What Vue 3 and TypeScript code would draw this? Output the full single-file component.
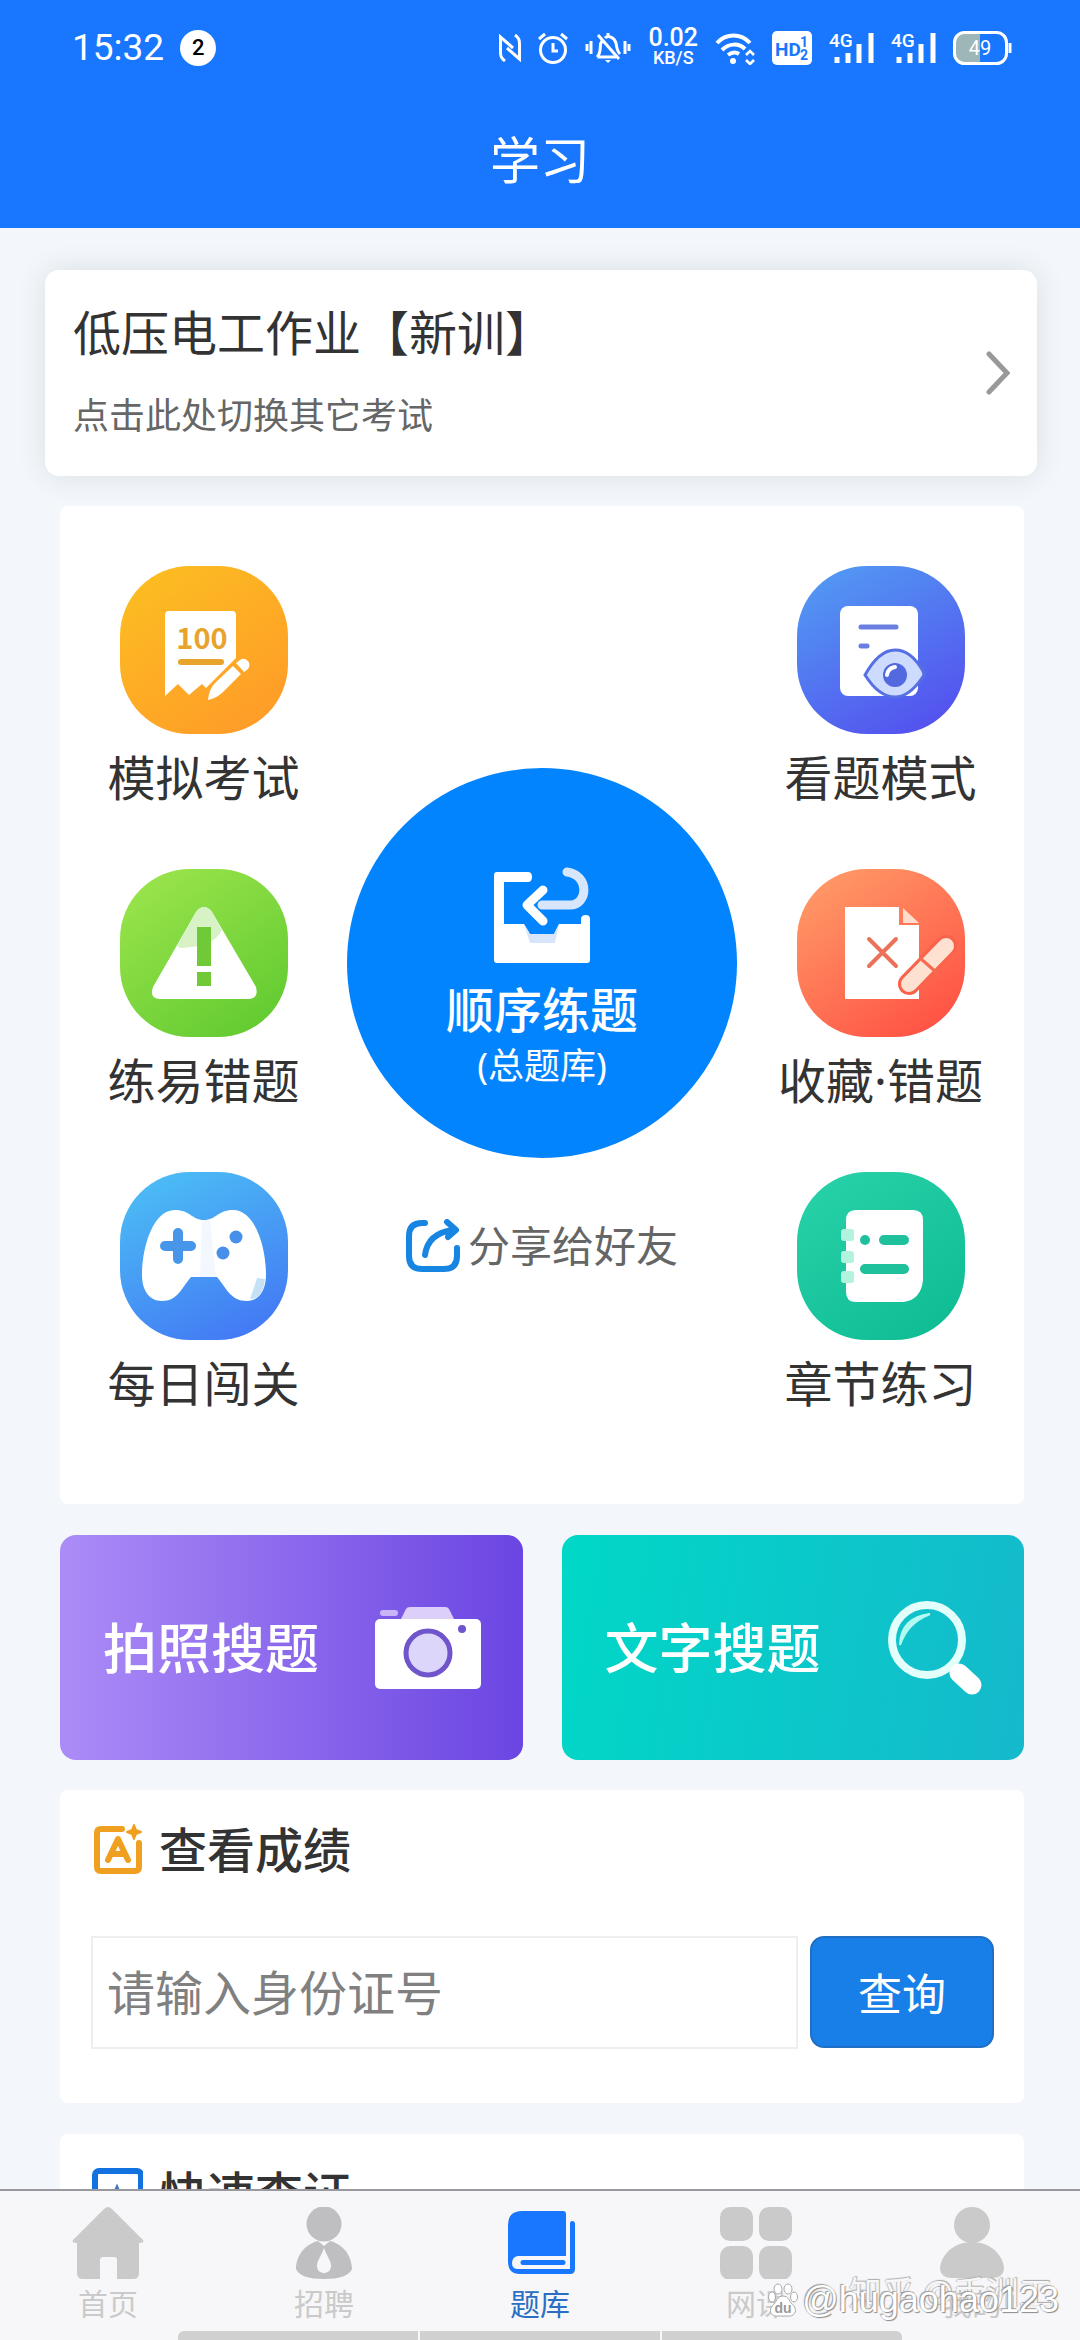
<script setup lang="ts">
import { ref } from 'vue'

interface Tile {
  id: string
  label: string
}

const leftTiles: Tile[] = [
  { id: 'exam', label: '模拟考试' },
  { id: 'mistake', label: '练易错题' },
  { id: 'daily', label: '每日闯关' },
]
const rightTiles: Tile[] = [
  { id: 'browse', label: '看题模式' },
  { id: 'favorite', label: '收藏·错题' },
  { id: 'chapter', label: '章节练习' },
]
const tabs: Tile[] = [
  { id: 'home', label: '首页' },
  { id: 'jobs', label: '招聘' },
  { id: 'bank', label: '题库' },
  { id: 'course', label: '网课' },
  { id: 'me', label: '我的' },
]
const activeTab = ref('bank')
const idNumber = ref('')
</script>

<template>
  <div class="app">
    <header class="header">
      <div class="status">
        <span class="time">15:32</span>
        <span class="count">2</span>
        <div class="status-icons">
          <svg width="22" height="28" viewBox="0 0 22 28" fill="none" stroke="#fff" stroke-width="3">
            <path d="M6 27C2 24 1.500 22 1.500 18V3L14 14" />
            <path d="M16 1C20 4 20.500 6 20.500 10V25L8 14" />
          </svg>
          <svg width="30" height="32" viewBox="0 0 30 32" fill="none" stroke="#fff" stroke-width="3">
            <circle cx="15" cy="18" r="12.500" />
            <path d="M15 11V19H20M1 7L7 2M29 7L23 2" />
          </svg>
          <svg width="46" height="32" viewBox="0 0 46 32" fill="none" stroke="#fff" stroke-width="3">
            <path d="M2 12V19M6 9V22M40 9V22M44 12V19M13 3L34 27M12 25H31M12 25C16 21 15 17 15.500 12L17 9M20 6C23 3 29 5 31 11C32 17 32 19 35 22M23 1V5" />
            <path d="M20 28H26L23 31Z" fill="#fff" stroke="none" />
          </svg>
          <span class="speed"><b>0.02</b><b class="unit">KB/S</b></span>
          <svg width="40" height="34" viewBox="0 0 40 34" fill="none" stroke="#fff" stroke-width="4">
            <path d="M2 12C11 2 26 2 35 12M7 19C14 12 24 12 30 18M13 24C17 21 21 21 24 23" />
            <circle cx="18" cy="30" r="3" fill="#fff" stroke="none" />
            <path d="M31 24L35 20L39 24M31 29L35 33L39 29" stroke-width="2.600" />
          </svg>
          <svg width="40" height="34" viewBox="0 0 40 34">
            <rect x="0" y="0" width="40" height="34" rx="5" fill="#fff" />
            <text x="3" y="25" class="hd">HD</text>
            <text x="28" y="16" class="hd-small">1</text>
            <text x="28" y="29" class="hd-small">2</text>
          </svg>
          <svg v-for="n in 2" :key="n" width="45" height="34" viewBox="0 0 45 34">
            <text x="0" y="16" class="net">4G</text>
            <path d="M8 26V32M19 22V32M30 13V32M42 2V32" stroke="#fff" stroke-width="5" />
          </svg>
          <svg width="59" height="34" viewBox="0 0 59 34">
            <path d="M12 2H27V32H12Q2 32 2 22V12Q2 2 12 2Z" fill="#9fb6b8" />
            <rect x="1.500" y="1.500" width="52" height="31" rx="10" fill="none" stroke="#fff" stroke-width="3" />
            <path d="M57 12V22" stroke="#fff" stroke-width="3" />
            <text x="27" y="24" class="battery" text-anchor="middle">49</text>
          </svg>
        </div>
      </div>
      <h1 class="title">学习</h1>
    </header>

    <main class="content">
      <button class="exam-card" type="button">
        <span class="exam-text">
          <span class="exam-name">低压电工作业【新训】</span>
          <span class="exam-hint">点击此处切换其它考试</span>
        </span>
        <svg width="24" height="44" viewBox="0 0 24 44" fill="none" stroke="#999" stroke-width="5" stroke-linecap="round">
          <path d="M3 3L21 22L3 41" />
        </svg>
      </button>

      <section class="panel practice">
        <div class="tiles">
          <button v-for="t in leftTiles" :key="t.id" class="tile" type="button">
            <span class="tile-icon" :class="t.id">
              <svg v-if="t.id === 'exam'" viewBox="0 0 168 168">
                <path d="M49 45H112Q116 45 116 49V92L86 122L82 118L69 129L58 118L45 130V49Q45 45 49 45Z" fill="#fff" />
                <text x="82" y="83" class="hundred" text-anchor="middle">100</text>
                <path d="M61 96H101" stroke="#e8a32c" stroke-width="6" stroke-linecap="round" />
                <path d="M88 134Q89 123 95 117L113 100L121 108L103 126Q97 132 88 134ZM116 97L120 94Q124 91 128 95Q131 99 128 103L124 106Z" fill="#fff" />
              </svg>
              <svg v-else-if="t.id === 'mistake'" viewBox="0 0 168 168">
                <path d="M76 43Q84 33 92 43L136 118Q139 130 128 130H40Q29 130 33 118Z" fill="#fff" />
                <path d="M76 43Q84 33 92 43L102 61Q94 78 60 79L57 77Z" fill="#d7f3c5" />
                <path d="M77 58H91V97H77ZM77 103H91V117H77Z" fill="#70ca38" />
              </svg>
              <svg v-else viewBox="0 0 168 168">
                <path d="M55 38C70 38 72 48 84 48C96 48 98 38 113 38C135 38 146 75 146 103C146 118 139 129 127 129C110 129 106 115 97 105H71C62 115 58 129 42 129C29 129 22 118 22 103C22 75 33 38 55 38Z" fill="#fff" />
                <path d="M82 48H90L96 105H80Z" fill="#f3f8fe" />
                <path d="M145 107L137 106Q134 116 130 127Q143 127 145 107Z" fill="#c4e1f5" />
                <path d="M58 61V87M45 74H71" stroke="#4896ea" stroke-width="10" stroke-linecap="round" />
                <circle cx="116" cy="65" r="6.500" fill="#4690ea" />
                <circle cx="103" cy="81" r="6.500" fill="#4690ea" />
              </svg>
            </span>
            <span class="tile-label">{{ t.label }}</span>
          </button>
        </div>

        <div class="center">
          <button class="main-practice" type="button">
            <svg width="96" height="96" viewBox="0 0 96 96" fill="none">
              <path d="M3 5H34Q38 5 38 10Q38 15 34 15H10V57H30L36 67H60L65 57H87V52Q87 48 92 48Q96 48 96 52V93Q96 96 93 96H3Q0 96 0 93V8Q0 5 3 5Z" fill="#fff" />
              <path d="M30 57L36 76H61L65 57L60 67H36Z" fill="#d8e4fa" />
              <path d="M48 38H76C94 38 96 8 73 5" stroke="#d8e6fc" stroke-width="9" stroke-linecap="round" />
              <path d="M49 23L33 38L49 54" stroke="#fff" stroke-width="9" stroke-linecap="round" stroke-linejoin="round" />
            </svg>
            <span class="main-label">顺序练题</span>
            <span class="main-sub">(总题库)</span>
          </button>
          <button class="share" type="button">
            <svg width="54" height="54" viewBox="0 0 54 54" fill="none" stroke="#1785e2" stroke-width="6" stroke-linecap="round" stroke-linejoin="round">
              <path d="M19 4H16Q3 4 3 17V37Q3 50 16 50H38Q51 50 51 37V29" />
              <path d="M19 36C21 21 31 13 47 11M41 3L50 11L42 18" />
            </svg>
            <span>分享给好友</span>
          </button>
        </div>

        <div class="tiles">
          <button v-for="t in rightTiles" :key="t.id" class="tile" type="button">
            <span class="tile-icon" :class="t.id">
              <svg v-if="t.id === 'browse'" viewBox="0 0 168 168">
                <rect x="43" y="40" width="78" height="90" rx="8" fill="#fff" />
                <path d="M64 61H99M64 80H70" stroke="#6a7fdf" stroke-width="5" stroke-linecap="round" />
                <path d="M68 109Q82 84 98 84Q114 84 126 105Q128 109 125 112Q112 131 98 131Q82 131 68 109Z" fill="#cddbff" stroke="#566fe2" stroke-width="3" />
                <circle cx="98" cy="109" r="12" fill="#5269df" />
                <path d="M90 109Q91 102 98 101" stroke="#fff" stroke-width="4" stroke-linecap="round" fill="none" />
              </svg>
              <svg v-else-if="t.id === 'favorite'" viewBox="0 0 168 168">
                <path d="M48 38H102V56H122V130H48Z" fill="#fff" />
                <path d="M106 39L122 54H106Z" fill="#ffdccb" />
                <path d="M72 70L99 97M99 70L72 97" stroke="#ed7058" stroke-width="4" stroke-linecap="round" />
                <path d="M112 115L149 77" stroke="#f9634a" stroke-width="22" stroke-linecap="round" />
                <path d="M112 115L149 77" stroke="#ffe1d2" stroke-width="16" stroke-linecap="round" />
                <path d="M123 89L139 103" stroke="#f36c51" stroke-width="3" />
              </svg>
              <svg v-else viewBox="0 0 168 168">
                <path d="M59 38H116Q126 38 126 48V108Q124 128 106 130H59Q49 130 49 120V48Q49 38 59 38Z" fill="#fff" />
                <g fill="#b1f3df">
                  <rect x="44" y="57" width="13" height="12" rx="3" />
                  <rect x="44" y="79" width="13" height="12" rx="3" />
                  <rect x="44" y="99" width="13" height="12" rx="3" />
                </g>
                <circle cx="68" cy="68" r="5" fill="#1fc19c" />
                <path d="M87 68H107M68 97H107" stroke="#1fc19c" stroke-width="10" stroke-linecap="round" />
              </svg>
            </span>
            <span class="tile-label">{{ t.label }}</span>
          </button>
        </div>
      </section>

      <div class="search-row">
        <button class="search-card photo" type="button">
          <span>拍照搜题</span>
          <svg width="106" height="82" viewBox="0 0 106 82">
            <path d="M26 12L31 2Q32 0 35 0H70Q73 0 74 2L79 12Z" fill="#dcd0fb" />
            <rect x="5" y="3" width="18" height="6" rx="3" fill="#c9b6f8" />
            <rect y="12" width="106" height="70" rx="5" fill="#fff" />
            <circle cx="53" cy="46" r="22" fill="#ddd6fb" stroke="#6f54cc" stroke-width="5" />
            <circle cx="87" cy="22" r="4" fill="#6f54cc" />
          </svg>
        </button>
        <button class="search-card word" type="button">
          <span>文字搜题</span>
          <svg width="94" height="94" viewBox="0 0 94 94" fill="none" stroke-linecap="round">
            <circle cx="39" cy="39" r="35" stroke="#e2fffb" stroke-width="8" />
            <path d="M12 44C12 26 23 15 42 13C25 20 17 30 12 44Z" fill="#b2fbf2" stroke="#b2fbf2" stroke-width="2" />
            <path d="M71 72L84 84" stroke="#fff" stroke-width="19" />
          </svg>
        </button>
      </div>

      <section class="panel block">
        <h2 class="block-title">
          <svg width="52" height="52" viewBox="0 0 52 52" fill="none" stroke="#f0a020" stroke-width="6" stroke-linecap="round" stroke-linejoin="round">
            <path d="M31 5H10Q6 5 6 9V43Q6 47 10 47H44Q48 47 48 43V19" />
            <path d="M17 36L27 15L37 36M21 30H33" />
            <path d="M43 1L45 6L50 8L45 10L43 15L41 10L36 8L41 6Z" fill="#f0a020" stroke-width="2" />
          </svg>
          查看成绩
        </h2>
        <form class="query" @submit.prevent>
          <input v-model="idNumber" type="text" placeholder="请输入身份证号" aria-label="身份证号" />
          <button type="submit">查询</button>
        </form>
      </section>

      <section class="panel block">
        <h2 class="block-title">
          <svg width="52" height="52" viewBox="0 0 52 52" fill="none">
            <rect x="4" y="3" width="46" height="46" rx="4" stroke="#1273e0" stroke-width="6" />
            <path d="M26 18L29 25H36L30 30L32 37L26 33L20 37L22 30L16 25H23Z" stroke="#3a78c0" stroke-width="2" />
          </svg>
          快速查证
        </h2>
      </section>
    </main>

    <footer class="footer">
      <nav class="tabs">
        <a v-for="t in tabs" :key="t.id" href="#" class="tab" :class="{ active: t.id === activeTab }" @click.prevent="activeTab = t.id">
          <svg width="72" height="72" viewBox="0 0 72 72" fill="currentColor">
            <path v-if="t.id === 'home'" d="M32 2Q36 -2 40 2L71 33Q73 36 67 36V66Q67 72 61 72H45V53Q45 50 42 50H31Q28 50 28 53V72H11Q5 72 5 66V36Q-1 36 1 33Z" />
            <template v-else-if="t.id === 'jobs'">
              <g fill="#bfbfc1">
                <circle cx="36" cy="17" r="17.500" />
                <path d="M30 34L36 39L42 34C58 38 64 52 64 62Q60 72 36 72Q12 72 8 62C8 52 14 38 30 34Z" />
              </g>
              <path d="M36 41C39 50 43 53 43 59C43 64 39 66 36 66C33 66 29 64 29 59C29 53 33 50 36 41Z" fill="#f7f7f9" />
            </template>
            <template v-else-if="t.id === 'bank'">
              <path d="M18 4H59Q62 4 62 7V49H14Q8 50 8 56Q8 62 14 62H66V17Q66 14 68 14Q71 14 71 17V62Q71 67 66 67H16Q4 67 4 55V18Q4 4 18 4Z" />
              <path d="M19 55.500H59" stroke="currentColor" stroke-width="5" stroke-linecap="round" />
            </template>
            <template v-else-if="t.id === 'course'">
              <rect width="33" height="34" rx="10" />
              <rect x="39" width="33" height="34" rx="10" />
              <rect y="39" width="33" height="34" rx="10" />
              <rect x="39" y="39" width="33" height="34" rx="10" />
            </template>
            <template v-else>
              <circle cx="36" cy="18" r="18" />
              <path d="M36 35C56 35 68 50 68 62Q67 71 56 71H16Q5 71 4 62C4 50 16 35 36 35Z" />
            </template>
          </svg>
          <span>{{ t.label }}</span>
        </a>
      </nav>
      <div class="gesture"><i></i><i></i><i></i></div>
      <span class="mark mark-back">知乎 @手洲工</span>
      <span class="mark mark-front">
        <svg width="30" height="34" viewBox="0 0 30 34" fill="#fff" stroke="#aaa" stroke-width="1">
          <ellipse cx="4" cy="14" rx="3.500" ry="5" />
          <ellipse cx="10" cy="6" rx="4" ry="5" />
          <ellipse cx="20" cy="6" rx="4" ry="5" />
          <ellipse cx="26" cy="14" rx="3.500" ry="5" />
          <path d="M15 13C21 13 21 19 26 23C30 29 25 34 20 33H10C4 34 0 29 4 23C9 19 9 13 15 13Z" />
          <text x="15" y="30" class="du" text-anchor="middle">du</text>
        </svg>
        @hugaohao123
      </span>
    </footer>
  </div>
</template>

<style>
body {
  background: #f3f7fb;
}
</style>

<style scoped>
* {
  box-sizing: border-box;
}
.app {
  display: flex;
  flex-direction: column;
  height: 100vh;
  background: #f3f7fb;
  color: #333;
  font-family: "Noto Sans", "Noto Sans CJK SC", sans-serif;
}
button {
  border: 0;
  padding: 0;
  background: none;
  color: inherit;
  font: inherit;
  cursor: pointer;
}
svg {
  display: block;
  flex: none;
}
.header {
  flex: none;
  background: #1976ff;
  color: #fff;
}
.status {
  display: flex;
  align-items: center;
  height: 96px;
  padding: 0 68px 0 72px;
}
.time {
  font: 400 37px/48px Roboto, sans-serif;
}
.count {
  width: 36px;
  height: 36px;
  margin-left: 16px;
  border-radius: 50%;
  background: #fff;
  color: #000;
  font: 500 22px/36px Roboto, sans-serif;
  text-align: center;
}
.status-icons {
  display: flex;
  align-items: center;
  gap: 17px;
  margin-left: auto;
}
.speed {
  display: flex;
  flex-direction: column;
  align-items: center;
  font: 500 25px/20px Roboto, sans-serif;
}
.speed b {
  font-weight: 500;
}
.speed .unit {
  font-size: 18px;
}
.hd {
  font: 700 19px Roboto, sans-serif;
  fill: #1976ff;
}
.hd-small {
  font: 700 14px Roboto, sans-serif;
  fill: #1976ff;
}
.net {
  font: 500 19px Roboto, sans-serif;
  fill: #fff;
}
.battery {
  font: 400 20px Roboto, sans-serif;
  fill: #fff;
}
.title {
  margin: 0;
  padding-bottom: 4px;
  font-size: 50px;
  font-weight: 400;
  line-height: 128px;
  text-align: center;
}
.content {
  flex: 1;
  min-height: 0;
  overflow: hidden;
  padding: 42px 56px 0 60px;
}
.exam-card {
  display: flex;
  align-items: center;
  justify-content: space-between;
  width: calc(100% + 28px);
  margin: 0 -13px 0 -15px;
  padding: 27px 27px 27px 28px;
  border-radius: 14px;
  background: #fff;
  box-shadow: 0 0 28px rgba(40, 60, 80, 0.13);
  text-align: left;
}
.exam-text {
  display: flex;
  flex-direction: column;
  gap: 20px;
  padding-bottom: 6px;
}
.exam-name {
  font-size: 48px;
  line-height: 72px;
}
.exam-hint {
  color: #666;
  font-size: 36px;
  line-height: 54px;
}
.panel {
  border-radius: 8px;
  background: #fff;
}
.practice {
  display: grid;
  grid-template-columns: 287px 1fr 287px;
  margin-top: 30px;
  padding: 60px 0 88px;
}
.tiles {
  display: flex;
  flex-direction: column;
  gap: 59px;
}
.tile {
  display: flex;
  flex-direction: column;
  align-items: center;
  gap: 12px;
}
.tile-icon {
  width: 168px;
  height: 168px;
  border-radius: 70px;
}
.tile-icon.exam {
  background: linear-gradient(145deg, #fcc021, #ff9829);
}
.tile-icon.mistake {
  background: linear-gradient(145deg, #a0e64e, #5cc82e);
}
.tile-icon.daily {
  background: linear-gradient(155deg, #4cc3f5, #4272f4);
}
.tile-icon.browse {
  background: linear-gradient(150deg, #529ff3, #5449ee);
}
.tile-icon.favorite {
  background: linear-gradient(145deg, #ffa06a, #ff4a40);
}
.tile-icon.chapter {
  background: linear-gradient(145deg, #2ad3aa, #0cba92);
}
.hundred {
  font: 700 29px "Noto Sans CJK SC", sans-serif;
  fill: #e8a32c;
}
.tile-label {
  font-size: 48px;
  line-height: 64px;
}
.center {
  display: flex;
  flex-direction: column;
  align-items: center;
  padding-top: 202px;
}
.main-practice {
  display: flex;
  flex-direction: column;
  align-items: center;
  width: 390px;
  height: 390px;
  padding-top: 99px;
  border-radius: 50%;
  background: #0284ff;
  color: #fff;
}
.main-label {
  margin-top: 15px;
  font-size: 48px;
  font-weight: 500;
  line-height: 64px;
}
.main-sub {
  font-size: 36px;
  line-height: 48px;
}
.share {
  display: flex;
  align-items: center;
  gap: 8px;
  margin-top: 58px;
  color: #666;
  font-size: 42px;
  line-height: 60px;
}
.search-row {
  display: grid;
  grid-template-columns: 1fr 1fr;
  gap: 39px;
  margin: 31px 0 30px;
}
.search-card {
  display: flex;
  align-items: center;
  justify-content: space-between;
  height: 225px;
  padding: 0 42px 0 43px;
  border-radius: 16px;
  color: #fff;
  font-size: 54px;
  font-weight: 500;
  line-height: 72px;
}
.photo {
  background: linear-gradient(90deg, #ab8cf7, #6b45e2);
}
.word {
  background: linear-gradient(100deg, #00d8c7, #15b9cc);
}
.block {
  margin-bottom: 31px;
  padding: 26px 30px 54px 31px;
}
.block-title {
  display: flex;
  align-items: center;
  gap: 16px;
  margin: 0;
  font-size: 48px;
  font-weight: 500;
  line-height: 68px;
}
.query {
  display: flex;
  gap: 12px;
  margin-top: 52px;
}
.query input {
  flex: 1;
  min-width: 0;
  height: 113px;
  padding: 0 14px;
  border: 2px solid #eee;
  outline: 0;
  color: #333;
  font: 400 48px/72px "Noto Sans", "Noto Sans CJK SC", sans-serif;
}
.query input::placeholder {
  color: #808080;
  opacity: 1;
}
.query button {
  width: 184px;
  height: 112px;
  border: 2px solid #1f70c4;
  border-radius: 14px;
  background: #187fe9;
  color: #fff;
  font-size: 44px;
}
.footer {
  position: relative;
  flex: none;
  border-top: 2px solid #98989e;
  background: #f7f7f9;
}
.tabs {
  display: flex;
  padding: 16px 0 9px;
}
.tab {
  display: flex;
  flex: 1;
  flex-direction: column;
  align-items: center;
  gap: 7px;
  color: #cacaca;
  font-size: 30px;
  line-height: 36px;
  text-decoration: none;
}
.tab.active {
  color: #1976ff;
}
.tab.active span {
  color: #2a6fc4;
}
.gesture {
  display: flex;
  gap: 2px;
  width: 67%;
  height: 9px;
  margin: 0 auto;
}
.gesture i {
  flex: 1;
  background: #d0d0d0;
}
.gesture i:first-child {
  border-top-left-radius: 6px;
}
.gesture i:last-child {
  border-top-right-radius: 6px;
}
.mark {
  position: absolute;
  display: flex;
  align-items: center;
  white-space: nowrap;
}
.mark-back {
  right: 28px;
  bottom: 27px;
  color: #f7f7f9;
  font-size: 33px;
  line-height: 40px;
  text-shadow: 1px -1px 1px #aaa, -1px 0 1px #bbb;
}
.mark-front {
  right: 21px;
  bottom: 18px;
  gap: 4px;
  color: #fff;
  font: 400 36px/44px "Liberation Sans", sans-serif;
  text-shadow: 1px 1px 1px #888, -1px -1px 1px #999;
}
.du {
  font: 700 14px "Liberation Sans", sans-serif;
  fill: #999;
  stroke: none;
  text-shadow: none;
}
</style>
